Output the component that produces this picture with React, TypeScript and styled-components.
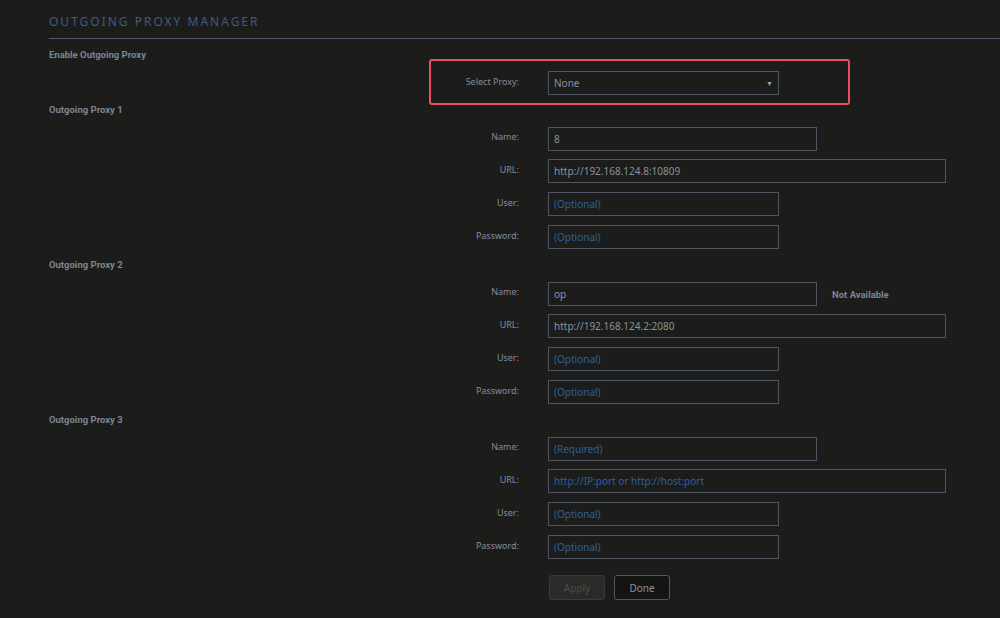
import React from "react";
import styled, { createGlobalStyle } from "styled-components";

const GlobalStyle = createGlobalStyle`
    html, body {
        margin: 0;
        padding: 0;
        background: #1c1d1b;
    }
    body {
        font-family: "Noto Sans", "Open Sans", "Liberation Sans", sans-serif;
    }
`;

const Page = styled.div`
    padding: 14px 0 20px 49px;
    min-height: 618px;
    box-sizing: border-box;
    background: #1c1d1b;
`;

const Title = styled.h1`
    margin: 0 0 10px;
    padding-bottom: 8px;
    border-bottom: 1px solid #4d5a6b;
    font-size: 12px;
    line-height: 16px;
    font-weight: 400;
    letter-spacing: 2px;
    color: #3e5b82;
    text-transform: uppercase;
`;

const Section = styled.section<{ $after?: number }>`
    display: flex;
    flex-direction: column;
    gap: 9px;
    margin-bottom: ${(p) => p.$after ?? 10}px;
`;

const Heading = styled.h2`
    margin: 0 0 1px;
    font-family: Roboto, "Noto Sans", sans-serif;
    font-size: 9.5px;
    line-height: 12px;
    font-weight: 700;
    color: #7a8595;
`;

const Row = styled.div`
    position: relative;
    display: grid;
    grid-template-columns: 470px auto 1fr;
    column-gap: 29px;
    align-items: center;
    height: 24px;
`;

const Highlight = styled.div`
    position: absolute;
    top: -12px;
    left: 380px;
    width: 421px;
    height: 46px;
    border: 2px solid #e9505c;
    border-radius: 3px;
    box-sizing: border-box;
    pointer-events: none;
`;

const Label = styled.label`
    text-align: right;
    font-size: 9px;
    line-height: 12px;
    color: #838c99;
    margin-top: -3px;
`;

const Field = styled.input<{ $w: number }>`
    width: ${(p) => p.$w}px;
    height: 24px;
    box-sizing: border-box;
    margin: 0;
    padding: 0 5px;
    background: #1c1d1b;
    border: 1px solid #4e5562;
    border-radius: 0;
    outline: none;
    font-family: inherit;
    font-size: 10px;
    color: #8a929e;

    &::placeholder {
        color: #2e5f9e;
        opacity: 1;
    }
`;

const SelectBox = styled.div`
    width: 231px;
    height: 24px;
    box-sizing: border-box;
    display: flex;
    align-items: center;
    justify-content: space-between;
    padding: 0 5px;
    border: 1px solid #4e5562;
    font-size: 10px;
    color: #8a929e;
`;

const Arrow = styled.span`
    font-size: 7px;
    color: #9aa2ad;
`;

const Note = styled.span`
    font-family: Roboto, "Noto Sans", sans-serif;
    font-size: 9.5px;
    font-weight: 700;
    color: #7a8595;
    margin-left: 15px;
`;

const Actions = styled.div`
    display: flex;
    gap: 9px;
    margin: 16px 0 0 500px;
`;

const Button = styled.button<{ $primary?: boolean }>`
    width: 56px;
    height: 25px;
    border-radius: 3px;
    font-family: inherit;
    font-size: 10px;
    padding: 0;
    border: 1px solid ${(p) => (p.$primary ? "#4d5766" : "#393b38")};
    background: ${(p) => (p.$primary ? "#141512" : "#2a2b28")};
    color: ${(p) => (p.$primary ? "#8a929e" : "#4a4c49")};
`;

type Proxy = {
    title: string;
    name?: string;
    url?: string;
    note?: string;
};

const proxies: Proxy[] = [
    { title: "Outgoing Proxy 1", name: "8", url: "http://192.168.124.8:10809" },
    { title: "Outgoing Proxy 2", name: "op", url: "http://192.168.124.2:2080", note: "Not Available" },
    { title: "Outgoing Proxy 3" },
];

const FieldRow: React.FC<{ label: string; children: React.ReactNode }> = ({ label, children }) => (
    <Row>
        <Label>{label}</Label>
        {children}
    </Row>
);

export default function App() {
    return (
        <>
            <GlobalStyle />
            <Page>
                <Title>Outgoing Proxy Manager</Title>
                <Section $after={9}>
                    <Heading>Enable Outgoing Proxy</Heading>
                    <Row>
                        <Highlight />
                        <Label>Select Proxy:</Label>
                        <SelectBox>
                            <span>None</span>
                            <Arrow>▼</Arrow>
                        </SelectBox>
                    </Row>
                </Section>
                {proxies.map((p) => (
                    <Section key={p.title}>
                        <Heading>{p.title}</Heading>
                        <FieldRow label="Name:">
                            <div>
                                <Field $w={269} defaultValue={p.name} placeholder="(Required)" />
                                {p.note && <Note>{p.note}</Note>}
                            </div>
                        </FieldRow>
                        <FieldRow label="URL:">
                            <Field $w={398} defaultValue={p.url} placeholder="http://IP:port or http://host:port" />
                        </FieldRow>
                        <FieldRow label="User:">
                            <Field $w={231} placeholder="(Optional)" />
                        </FieldRow>
                        <FieldRow label="Password:">
                            <Field $w={231} placeholder="(Optional)" />
                        </FieldRow>
                    </Section>
                ))}
                <Actions>
                    <Button disabled>Apply</Button>
                    <Button $primary>Done</Button>
                </Actions>
            </Page>
        </>
    );
}
